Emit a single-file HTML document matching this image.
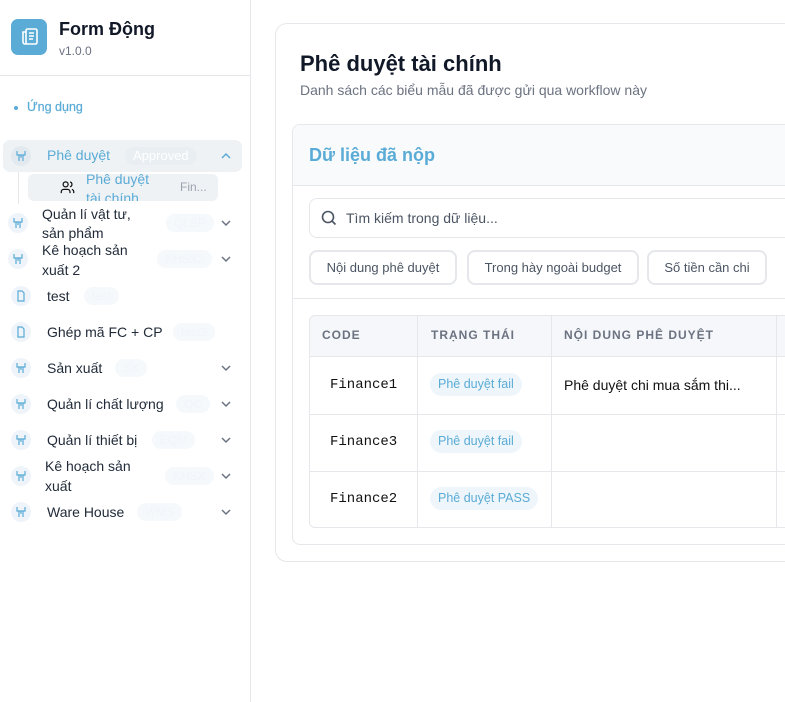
<!DOCTYPE html>
<html><head><meta charset="utf-8"><style>
*{box-sizing:border-box;margin:0;padding:0}
body{width:785px;height:702px;overflow:hidden;background:#fff;font-family:"Liberation Sans","Noto Sans CJK SC",sans-serif;color:#111827;position:relative}
.abs{position:absolute}
.sb{left:0;top:0;width:251px;height:702px;border-right:1px solid #e5e7eb;background:#fff}
.ic{position:absolute;width:20px;height:20px;border-radius:50%;background:#eef4f9}
.ic svg{position:absolute;left:4px;top:4px}
.item{position:absolute;left:0;width:250px;font-size:14px;color:#1f2937}
.bdg{position:absolute;height:18px;border-radius:9px;background:#f5f9fc;color:#f0f5f9;font-size:12px;line-height:18px;padding:0 8px}
.chev{position:absolute;left:220px}
.btn{position:absolute;top:250px;height:35px;border:2px solid #e5e7eb;border-radius:8px;font-size:13px;color:#4b5563;text-align:center;line-height:31px;background:#fff}
.th{position:absolute;top:328px;font-size:12px;font-weight:bold;color:#6b7280;letter-spacing:1px}
.mono{position:absolute;font-family:"Liberation Mono",monospace;font-size:14px;color:#111}
.pill{position:absolute;height:23px;border-radius:12px;background:#eef6fb;color:#5aabd6;font-size:12.5px;line-height:23px;padding:0 8px}
</style></head><body>
<div class="abs sb"></div>
<div class="abs" style="left:11px;top:19px;width:36px;height:36px;border-radius:7px;background:#5aabd6">
<svg width="36" height="36" viewBox="0 0 36 36" fill="none" stroke="#fff" stroke-width="1.6"><rect x="15" y="10" width="11" height="15" rx="1.5"/><path d="M15 13h-3v10a2 2 0 0 0 2 2h2"/><path d="M18 14h5M18 17h5M18 20h4"/></svg></div>
<div class="abs" style="left:59px;top:19px;font-size:18px;font-weight:bold">Form Động</div>
<div class="abs" style="left:59px;top:44px;font-size:12px;color:#6b7280">v1.0.0</div>
<div class="abs" style="left:0;top:75px;width:250px;height:1px;background:#e5e7eb"></div>
<div class="abs" style="left:14px;top:106px;width:4px;height:4px;border-radius:2px;background:#5aabd6"></div>
<div class="abs" style="left:27px;top:100px;font-size:12.5px;color:#5aabd6;-webkit-text-stroke:0.2px #5aabd6">Ứng dụng</div>

<div class="abs" style="left:3px;top:140px;width:239px;height:32px;border-radius:7px;background:#eef2f5"></div>
<div class="ic" style="left:11px;top:146px;background:#e2eaf0"><svg width="12" height="12" viewBox="0 0 12 12" fill="none" stroke="#5aabd6" stroke-width="1.2"><path d="M2 1v4h8V1M4 5v6M8 5v6M6 5v3"/></svg></div>
<div class="abs" style="left:47px;top:147px;font-size:14px;color:#5aabd6">Phê duyệt</div>
<div class="bdg" style="left:125px;top:147px;background:#e8eef2;color:#fff;font-size:13px">Approved</div>
<svg class="abs" style="left:220px;top:150px" width="12" height="12" viewBox="0 0 12 12" fill="none" stroke="#5aabd6" stroke-width="1.5"><path d="M2 8l4-4 4 4"/></svg>
<div class="abs" style="left:18px;top:172px;width:1px;height:32px;background:#e5e7eb"></div>
<div class="abs" style="left:28px;top:174px;width:190px;height:27px;border-radius:6px;background:#eef2f5;overflow:hidden">
<svg class="abs" style="left:32px;top:6px" width="15" height="15" viewBox="0 0 24 24" fill="none" stroke="#111" stroke-width="2"><circle cx="9" cy="7" r="4"/><path d="M2 21v-2a4 4 0 0 1 4-4h6a4 4 0 0 1 4 4v2M16 3.1a4 4 0 0 1 0 7.8M22 21v-2a4 4 0 0 0-3-3.9"/></svg>
<div class="abs" style="left:58px;top:-4px;font-size:14px;color:#5aabd6;line-height:19px;width:80px">Phê duyệt tài chính</div>
<div class="abs" style="left:152px;top:6px;font-size:12px;color:#9ca3af">Fin...</div></div>

<div class="ic" style="left:8px;top:213px"><svg width="12" height="12" viewBox="0 0 12 12" fill="none" stroke="#5aabd6" stroke-width="1.2"><path d="M2 1v4h8V1M4 5v6M8 5v6M6 5v3"/></svg></div>
<div class="item" style="left:42px;top:205px;line-height:19px;width:110px">Quản lí vật tư, sản phẩm</div>
<div class="bdg" style="left:166px;top:214px">QLSP</div>
<svg class="abs chev" style="top:217px" width="12" height="12" viewBox="0 0 12 12" fill="none" stroke="#6b7280" stroke-width="1.5"><path d="M2 4l4 4 4-4"/></svg>

<div class="ic" style="left:8px;top:249px"><svg width="12" height="12" viewBox="0 0 12 12" fill="none" stroke="#5aabd6" stroke-width="1.2"><path d="M2 1v4h8V1M4 5v6M8 5v6M6 5v3"/></svg></div>
<div class="item" style="left:42px;top:240px;line-height:20px;width:110px">Kê hoạch sản xuất 2</div>
<div class="bdg" style="left:157px;top:250px">KHSX2</div>
<svg class="abs chev" style="top:253px" width="12" height="12" viewBox="0 0 12 12" fill="none" stroke="#6b7280" stroke-width="1.5"><path d="M2 4l4 4 4-4"/></svg>

<div class="ic" style="left:11px;top:286px"><svg width="12" height="12" viewBox="0 0 12 12" fill="none" stroke="#5aabd6" stroke-width="1.2"><path d="M3 1h4l2 2v8H3z"/></svg></div>
<div class="item" style="left:47px;top:288px">test</div>
<div class="bdg" style="left:84px;top:287px">test</div>

<div class="ic" style="left:11px;top:322px"><svg width="12" height="12" viewBox="0 0 12 12" fill="none" stroke="#5aabd6" stroke-width="1.2"><path d="M3 1h4l2 2v8H3z"/></svg></div>
<div class="item" style="left:47px;top:324px">Ghép mã FC + CP</div>
<div class="bdg" style="left:173px;top:323px">test2</div>

<div class="ic" style="left:11px;top:358px"><svg width="12" height="12" viewBox="0 0 12 12" fill="none" stroke="#5aabd6" stroke-width="1.2"><path d="M2 1v4h8V1M4 5v6M8 5v6M6 5v3"/></svg></div>
<div class="item" style="left:47px;top:360px">Sản xuất</div>
<div class="bdg" style="left:115px;top:359px">SX</div>
<svg class="abs chev" style="top:362px" width="12" height="12" viewBox="0 0 12 12" fill="none" stroke="#6b7280" stroke-width="1.5"><path d="M2 4l4 4 4-4"/></svg>

<div class="ic" style="left:11px;top:394px"><svg width="12" height="12" viewBox="0 0 12 12" fill="none" stroke="#5aabd6" stroke-width="1.2"><path d="M2 1v4h8V1M4 5v6M8 5v6M6 5v3"/></svg></div>
<div class="item" style="left:47px;top:396px">Quản lí chất lượng</div>
<div class="bdg" style="left:176px;top:395px">QC</div>
<svg class="abs chev" style="top:398px" width="12" height="12" viewBox="0 0 12 12" fill="none" stroke="#6b7280" stroke-width="1.5"><path d="M2 4l4 4 4-4"/></svg>

<div class="ic" style="left:11px;top:430px"><svg width="12" height="12" viewBox="0 0 12 12" fill="none" stroke="#5aabd6" stroke-width="1.2"><path d="M2 1v4h8V1M4 5v6M8 5v6M6 5v3"/></svg></div>
<div class="item" style="left:47px;top:432px">Quản lí thiết bị</div>
<div class="bdg" style="left:152px;top:431px">EQM</div>
<svg class="abs chev" style="top:434px" width="12" height="12" viewBox="0 0 12 12" fill="none" stroke="#6b7280" stroke-width="1.5"><path d="M2 4l4 4 4-4"/></svg>

<div class="ic" style="left:11px;top:466px"><svg width="12" height="12" viewBox="0 0 12 12" fill="none" stroke="#5aabd6" stroke-width="1.2"><path d="M2 1v4h8V1M4 5v6M8 5v6M6 5v3"/></svg></div>
<div class="item" style="left:45px;top:456px;line-height:20px;width:100px">Kê hoạch sản xuất</div>
<div class="bdg" style="left:165px;top:467px">KHSX</div>
<svg class="abs chev" style="top:470px" width="12" height="12" viewBox="0 0 12 12" fill="none" stroke="#6b7280" stroke-width="1.5"><path d="M2 4l4 4 4-4"/></svg>

<div class="ic" style="left:11px;top:502px"><svg width="12" height="12" viewBox="0 0 12 12" fill="none" stroke="#5aabd6" stroke-width="1.2"><path d="M2 1v4h8V1M4 5v6M8 5v6M6 5v3"/></svg></div>
<div class="item" style="left:47px;top:504px">Ware House</div>
<div class="bdg" style="left:137px;top:503px">WMS</div>
<svg class="abs chev" style="top:506px" width="12" height="12" viewBox="0 0 12 12" fill="none" stroke="#6b7280" stroke-width="1.5"><path d="M2 4l4 4 4-4"/></svg>

<div class="abs" style="left:275px;top:23px;width:530px;height:539px;border:1px solid #e5e7eb;border-radius:12px;background:#fff"></div>
<div class="abs" style="left:300px;top:51px;font-size:22px;font-weight:bold;color:#111827">Phê duyệt tài chính</div>
<div class="abs" style="left:300px;top:82px;font-size:14px;color:#6b7280">Danh sách các biểu mẫu đã được gửi qua workflow này</div>
<div class="abs" style="left:292px;top:124px;width:520px;height:421px;border:1px solid #e5e7eb;border-radius:8px;background:#fff;overflow:hidden">
<div class="abs" style="left:0;top:0;width:520px;height:61px;background:#f8fafc;border-bottom:1px solid #e5e7eb"></div>
<div class="abs" style="left:16px;top:20px;font-size:18px;font-weight:bold;color:#5aabd6">Dữ liệu đã nộp</div>
</div>
<div class="abs" style="left:309px;top:198px;width:500px;height:40px;border:1px solid #e5e7eb;border-radius:8px;background:#fff"></div>
<svg class="abs" style="left:321px;top:210px" width="16" height="16" viewBox="0 0 16 16" fill="none" stroke="#4b5563" stroke-width="1.6"><circle cx="7" cy="7" r="5.5"/><path d="M11 11l3.5 3.5"/></svg>
<div class="abs" style="left:346px;top:210px;font-size:14px;color:#4b5563">Tìm kiếm trong dữ liệu...</div>
<div class="btn" style="left:309px;width:148px">Nội dung phê duyệt</div>
<div class="btn" style="left:467px;width:172px">Trong hày ngoài budget</div>
<div class="btn" style="left:647px;width:120px">Số tiền cần chi</div>
<div class="abs" style="left:293px;top:298px;width:492px;height:1px;background:#e5e7eb"></div>

<div class="abs" style="left:309px;top:315px;width:500px;height:213px;border:1px solid #e5e7eb;border-radius:6px;overflow:hidden;background:#fff">
<div class="abs" style="left:0;top:0;width:500px;height:41px;background:#f5f7fa;border-bottom:1px solid #e5e7eb"></div>
<div class="abs" style="left:0;top:98px;width:500px;height:1px;background:#e5e7eb"></div>
<div class="abs" style="left:0;top:155px;width:500px;height:1px;background:#e5e7eb"></div>
<div class="abs" style="left:107px;top:0;width:1px;height:213px;background:#e5e7eb"></div>
<div class="abs" style="left:241px;top:0;width:1px;height:213px;background:#e5e7eb"></div>
<div class="abs" style="left:466px;top:0;width:1px;height:213px;background:#e5e7eb"></div>
</div>
<div class="th" style="left:322px">CODE</div>
<div class="th" style="left:431px">TRẠNG THÁI</div>
<div class="th" style="left:564px">NỘI DUNG PHÊ DUYỆT</div>
<div class="mono" style="left:330px;top:377px">Finance1</div>
<div class="mono" style="left:330px;top:434px">Finance3</div>
<div class="mono" style="left:330px;top:491px">Finance2</div>
<div class="pill" style="left:430px;top:373px">Phê duyệt fail</div>
<div class="pill" style="left:430px;top:430px">Phê duyệt fail</div>
<div class="pill" style="left:430px;top:487px">Phê duyệt PASS</div>
<div class="abs" style="left:564px;top:377px;font-size:14px;color:#111">Phê duyệt chi mua sắm thi...</div>
</body></html>
